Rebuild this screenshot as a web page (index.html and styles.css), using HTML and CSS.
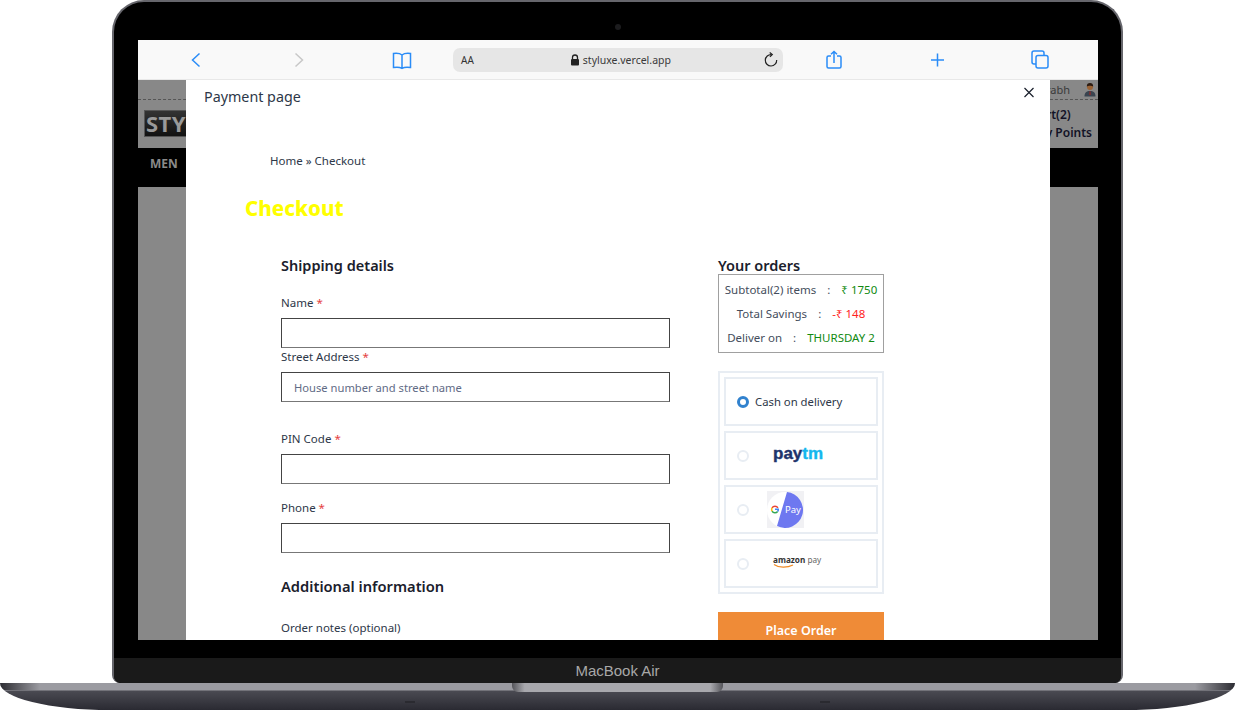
FILE: index.html
```html
<!DOCTYPE html>
<html lang="en">
<head>
    <meta charset="UTF-8">
    <title>Payment page</title>
    <link rel="stylesheet" href="styles.css">
</head>
<body>
    <div class="laptop">
        <div class="lid">
            <div class="camera"></div>
            <div class="screen">
                <div class="toolbar">
                    <svg width="24" height="24" viewBox="0 0 24 24"><path d="M15.500 5.500 8.500 12l7 6.500" class="stroke-blue"/></svg>
                    <svg width="24" height="24" viewBox="0 0 24 24"><path d="M8.500 5.500l7 6.500-7 6.500" class="stroke-grey"/></svg>
                    <svg width="24" height="24" viewBox="0 0 24 24"><path d="M12 7C10 5.300 7 5.100 3.500 5.500v14c3.500-.5 6.500-.3 8.500.8 2-1.100 5-1.300 8.500-.8v-14C17 5.100 14 5.300 12 7zM12 7v13" class="stroke-blue"/></svg>
                    <div class="address">
                        <span class="aa">AA</span>
                        <span class="url">
                            <svg width="10" height="12" viewBox="0 0 10 12"><path d="M2.500 5V3.500a2.500 2.500 0 0 1 5 0V5" fill="none" stroke="#222" stroke-width="1.300"/><rect x="1" y="5" width="8" height="6.500" rx="1" fill="#222"/></svg>
                            styluxe.vercel.app
                        </span>
                        <svg width="16" height="16" viewBox="0 0 16 16"><path d="M8.500 2.600A5.700 5.700 0 1 0 13.700 8" fill="none" stroke="#222" stroke-width="1.200"/><path d="M6.700.6l2.600 2-2.400 2.200" fill="none" stroke="#222" stroke-width="1.200"/></svg>
                    </div>
                    <svg width="24" height="24" viewBox="0 0 24 24"><path d="M9 8H6.500A1.500 1.500 0 0 0 5 9.500v9A1.500 1.500 0 0 0 6.500 20h11a1.500 1.500 0 0 0 1.500-1.500v-9A1.500 1.500 0 0 0 17.500 8H15M12 15V3.500M9 6.300l3-2.800 3 2.800" class="stroke-blue"/></svg>
                    <svg width="24" height="24" viewBox="0 0 24 24"><path d="M12.500 5.500v13M6 12h13" class="stroke-blue"/></svg>
                    <svg width="24" height="24" viewBox="0 0 24 24"><rect x="8" y="7.500" width="12" height="12.500" rx="2" class="stroke-blue"/><path d="M8 16H6a2 2 0 0 1-2-2V5a2 2 0 0 1 2-2h8a2 2 0 0 1 2 2v2.500" class="stroke-blue"/></svg>
                </div>

                <div class="viewport">
                    <div class="site">
                        <div class="site-top">
                            <span>Saurabh</span>
                            <svg width="12" height="15" viewBox="0 0 12 15"><path d="M.5 14.500c0-4 2-5.500 5.500-5.500s5.500 1.500 5.500 5.500z" fill="#3a4450"/><path d="M5.500 9h1l.4 4H5.100z" fill="#8a2c2c"/><circle cx="6" cy="5" r="3" fill="#9a6234"/><path d="M2.800 4.500C2.800 2 4 1 6 1s3.200 1 3.200 3.500C8 3.400 4 3.400 2.800 4.500z" fill="#2b1a10"/></svg>
                        </div>
                        <div class="site-head">
                            <div class="site-logo">STYLUXE</div>
                            <div class="site-links">
                                <span>Cart(2)</span>
                                <span>Loyalty Points</span>
                            </div>
                        </div>
                        <div class="site-nav">MEN</div>
                    </div>

                    <div class="modal">
                        <div class="modal-title">Payment page</div>
                        <svg class="modal-close" width="12" height="12" viewBox="0 0 12 12"><path d="M1.500 1l9 9M10.500 1l-9 9" stroke="#1a202c" stroke-width="1.200"/></svg>
                        <div class="crumbs">Home » Checkout</div>
                        <h1 class="page-title">Checkout</h1>

                        <div class="columns">
                            <form class="shipping">
                                <h2 class="section-title">Shipping details</h2>
                                <div class="field field-name">
                                    <label>Name <span class="req">*</span></label>
                                    <input type="text">
                                </div>
                                <div class="field field-street">
                                    <label>Street Address <span class="req">*</span></label>
                                    <input type="text" placeholder="House number and street name">
                                </div>
                                <div class="field field-pin">
                                    <label>PIN Code <span class="req">*</span></label>
                                    <input type="text">
                                </div>
                                <div class="field field-phone">
                                    <label>Phone <span class="req">*</span></label>
                                    <input type="text">
                                </div>
                                <h2 class="section-title extra-title">Additional information</h2>
                                <div class="field field-notes">
                                    <label>Order notes (optional)</label>
                                </div>
                            </form>

                            <div class="orders">
                                <h2 class="section-title orders-title">Your orders</h2>
                                <div class="summary">
                                    <div class="summary-row"><span>Subtotal(2) items</span><span>:</span><span class="green">₹ 1750</span></div>
                                    <div class="summary-row"><span>Total Savings</span><span>:</span><span class="red">-₹ 148</span></div>
                                    <div class="summary-row"><span>Deliver on</span><span>:</span><span class="green">THURSDAY 2</span></div>
                                </div>
                                <div class="pay-box">
                                    <div class="pay-option">
                                        <span class="radio radio-on"></span>
                                        <span class="cash">Cash on delivery</span>
                                    </div>
                                    <div class="pay-option">
                                        <span class="radio"></span>
                                        <span class="paytm">pay<span class="paytm-tm">tm</span></span>
                                    </div>
                                    <div class="pay-option">
                                        <span class="radio"></span>
                                        <span class="gpay">
                                            <svg width="37" height="37" viewBox="0 0 37 37">
                                                <rect width="37" height="37" fill="#f1f1f4"/>
                                                <circle cx="18" cy="19" r="18" fill="#fff"/>
                                                <path d="M20 1A18 18 0 1 1 10 35z" fill="#6e78f0"/>
                                                <path d="M10.900 16.900A3.300 3.300 0 0 0 5.100 16.900" fill="none" stroke="#ea4335" stroke-width="1.500"/>
                                                <path d="M5.100 16.900A3.300 3.300 0 0 0 5.100 20.100" fill="none" stroke="#fbbc05" stroke-width="1.500"/>
                                                <path d="M5.100 20.100A3.300 3.300 0 0 0 10.600 20.500" fill="none" stroke="#34a853" stroke-width="1.500"/>
                                                <path d="M10.600 20.500Q11.400 19.500 11.300 18.300H8" fill="none" stroke="#4285f4" stroke-width="1.500"/>
                                            </svg>
                                            <span class="gpay-text">Pay</span>
                                        </span>
                                    </div>
                                    <div class="pay-option">
                                        <span class="radio"></span>
                                        <span class="amazon">
                                            <span><b>amazon</b> pay</span>
                                            <svg width="22" height="5" viewBox="0 0 22 5"><path d="M1 .5c5 3.500 13 3.500 19 .5" fill="none" stroke="#f08a24" stroke-width="1.200"/></svg>
                                        </span>
                                    </div>
                                </div>
                                <button type="button" class="place-order">Place Order</button>
                            </div>
                        </div>
                    </div>
                </div>
            </div>
            <div class="chin">MacBook Air</div>
        </div>
        <div class="base">
            <div class="notch"></div>
            <div class="foot foot-left"></div>
            <div class="foot foot-right"></div>
        </div>
    </div>
</body>
</html>
```
FILE: styles.css
```css
* {
    box-sizing: border-box;
}
body {
    margin: 0;
    background: #fff;
    font-family: "Noto Sans", Arial, sans-serif;
    color: #2d3748;
    overflow: hidden;
}
.laptop {
    width: 1235px;
    height: 710px;
    position: relative;
    overflow: hidden;
}

/* lid and screen */
.lid {
    width: 1011px;
    height: 683px;
    margin-left: 112px;
    padding: 38px 23px 0 24px;
    background: #000;
    border: 2px solid #66666c;
    border-bottom: 0;
    border-radius: 32px 32px 8px 8px;
    position: relative;
}
.camera {
    position: absolute;
    top: 22px;
    left: 501px;
    width: 6px;
    height: 6px;
    border-radius: 50%;
    background: #1c1c1e;
}
.screen {
    width: 960px;
    height: 600px;
    display: flex;
    flex-direction: column;
    overflow: hidden;
}
.toolbar {
    height: 40px;
    flex-shrink: 0;
    background: #f9f9f9;
    border-bottom: 1px solid #e8e8e8;
    display: flex;
    align-items: center;
    gap: 79px;
    padding-left: 46px;
}
.stroke-blue {
    fill: none;
    stroke: #2a8cf7;
    stroke-width: 1.500;
}
.stroke-grey {
    fill: none;
    stroke: #c8c8c8;
    stroke-width: 1.500;
}
.address {
    width: 330px;
    height: 24px;
    margin: 0 -40px;
    flex-shrink: 0;
    background: #e6e6e6;
    border-radius: 7px;
    display: flex;
    align-items: center;
    justify-content: space-between;
    padding: 0 4px 0 8px;
    font-size: 10.500px;
    color: #333;
}
.aa {
    font-size: 10px;
}
.url {
    display: flex;
    align-items: center;
    gap: 3px;
    color: #3a3a3a;
    margin-left: 4px;
}

/* dimmed page behind the modal */
.viewport {
    height: 560px;
    position: relative;
    background: #888;
    overflow: hidden;
}
.site-top {
    height: 20px;
    border-bottom: 1px dashed #555;
    display: flex;
    justify-content: flex-end;
    align-items: center;
    gap: 14px;
    padding-right: 2px;
    font-size: 11px;
    color: #3a3a3a;
}
.site-head {
    height: 48px;
    display: flex;
    justify-content: space-between;
    padding: 10px 6px 0 6px;
}
.site-logo {
    width: 110px;
    height: 27px;
    background: linear-gradient(#333, #111);
    border: 1px solid #555;
    color: #999;
    font-size: 22px;
    font-weight: 700;
    line-height: 25px;
    padding-left: 1px;
    letter-spacing: .5px;
}
.site-links {
    display: flex;
    flex-direction: column;
    align-items: center;
    gap: 3px;
    font-size: 12px;
    font-weight: 600;
    color: #131326;
    line-height: 15px;
    margin-top: -3px;
}
.site-nav {
    height: 39px;
    background: #000;
    color: #8a8a8a;
    font-size: 12px;
    font-weight: 700;
    padding: 7px 12px;
}

/* modal */
.modal {
    position: absolute;
    top: 0;
    left: 48px;
    width: 864px;
    height: 100%;
    background: #fff;
    padding: 6px 0 0 18px;
}
.modal-title {
    font-size: 14.300px;
    line-height: 22px;
}
.modal-close {
    position: absolute;
    top: 7px;
    right: 15px;
}
.crumbs {
    font-size: 11.500px;
    line-height: 16px;
    margin: 45px 0 0 66px;
}
.page-title {
    font-size: 20.500px;
    line-height: 28px;
    color: #ff0;
    font-weight: 800;
    margin: 25px 0 0 41px;
}
.columns {
    display: flex;
    gap: 48px;
    margin: 33px 0 0 77px;
}
.shipping {
    width: 389px;
    flex-shrink: 0;
}
.orders {
    width: 166px;
    flex-shrink: 0;
}
.section-title {
    font-size: 14.500px;
    line-height: 20px;
    font-weight: 600;
    color: #1a202c;
    margin: 0;
}
.orders-title {
    line-height: 18px;
    margin-top: 1px;
}
.field label {
    display: block;
    font-size: 11.500px;
    line-height: 16px;
    margin-bottom: 7px;
}
.field-name {
    margin-top: 20px;
}
.field-street label {
    margin-top: 1px;
}
.field-pin {
    margin-top: 29px;
}
.field-phone {
    margin-top: 16px;
}
.field-notes {
    margin-top: 24px;
}
.extra-title {
    margin-top: 23px;
    font-size: 14.700px;
}
.req {
    color: #e53e3e;
}
.field input {
    display: block;
    width: 100%;
    height: 30px;
    border: 1px solid #444;
    border-bottom-color: #777;
    padding: 0 12px;
    font-family: inherit;
    font-size: 11.200px;
    background: #fff;
}
.field input::placeholder {
    color: #5f6b85;
    opacity: 1;
}

/* order summary */
.summary {
    height: 79px;
    border: 1px solid #a0a0a0;
    display: flex;
    flex-direction: column;
    gap: 8px;
    padding: 7px 0 0;
    font-size: 11.500px;
    color: #444d5c;
}
.summary-row {
    display: flex;
    justify-content: center;
    gap: 11px;
    line-height: 16px;
    white-space: nowrap;
}
.green {
    color: #118a11;
}
.red {
    color: #f22;
}
.pay-box {
    margin-top: 18px;
    height: 223px;
    border: 2px solid #e8edf3;
    padding: 4px;
    display: flex;
    flex-direction: column;
    gap: 5px;
}
.pay-option {
    height: 49px;
    border: 2px solid #e8edf3;
    display: flex;
    align-items: center;
    padding-left: 11px;
}
.radio {
    width: 12px;
    height: 12px;
    border-radius: 50%;
    border: 2px solid #e8edf3;
    flex-shrink: 0;
    margin-top: 1px;
}
.radio-on {
    background: #fff;
    border: 3.500px solid #3182ce;
    margin-top: 0;
}
.cash {
    font-size: 11.300px;
    margin-left: 6px;
}
.paytm {
    margin: -3px 0 0 24px;
    font-family: "Liberation Sans", Arial, sans-serif;
    font-size: 17px;
    font-weight: 700;
    color: #20336b;
    line-height: 16px;
    -webkit-text-stroke: .4px currentColor;
}
.paytm-tm {
    color: #14b7ee;
}
.gpay {
    margin: -1px 0 0 18px;
    position: relative;
    display: block;
    height: 37px;
}
.gpay-text {
    position: absolute;
    top: 11px;
    left: 18px;
    font-size: 9.500px;
    line-height: 16px;
    color: #fff;
}
.amazon {
    margin: -4px 0 0 24px;
    font-size: 8.200px;
    line-height: 10px;
    color: #666;
    display: flex;
    flex-direction: column;
}
.amazon b {
    color: #333;
}
.amazon svg {
    margin-top: -1px;
}
.place-order {
    display: block;
    width: 100%;
    height: 36px;
    margin-top: 18px;
    background: #ef8b37;
    color: #fff;
    border: none;
    font-family: inherit;
    font-size: 12.500px;
    font-weight: 600;
    padding: 0;
}

/* bottom of the laptop */
.chin {
    position: absolute;
    left: 0;
    right: 0;
    bottom: 0;
    height: 25px;
    background: #1a1a1a;
    border-radius: 0 0 7px 7px;
    color: #a8a8a8;
    font-family: "Liberation Sans", Arial, sans-serif;
    font-size: 15px;
    line-height: 25px;
    text-align: center;
}
.base {
    height: 27px;
    position: relative;
    background:
        linear-gradient(90deg, #2c2c32 0, rgba(60, 60, 66, 0) 40px, rgba(60, 60, 66, 0) 1195px, #2c2c32 100%) 0 0 / 100% 7px no-repeat,
        linear-gradient(#9b9ba1 0, #9b9ba1 7px, #4a4a52 8px, #2a2a32 100%);
    border-radius: 0 0 110px 110px / 0 0 27px 27px;
}
.notch {
    position: absolute;
    top: 0;
    left: 512px;
    width: 211px;
    height: 9px;
    background: linear-gradient(90deg, #55555a, #a8a8ad 6%, #a8a8ad 94%, #55555a);
    border-radius: 0 0 6px 6px;
}
.foot {
    position: absolute;
    top: 18px;
    width: 10px;
    height: 2px;
    background: #2a2a30;
}
.foot-left {
    left: 405px;
}
.foot-right {
    left: 820px;
}
```
